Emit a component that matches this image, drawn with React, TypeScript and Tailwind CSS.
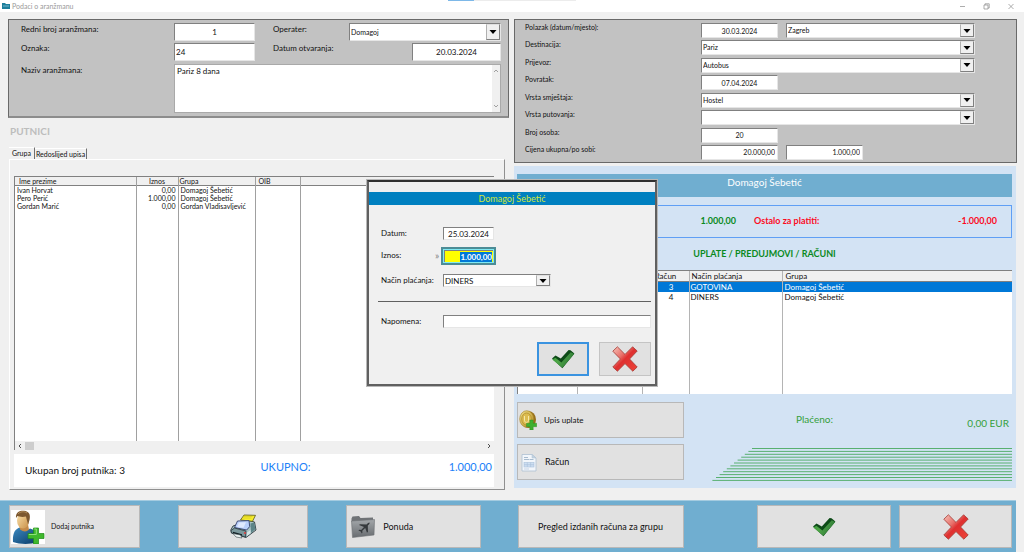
import { useEffect, useRef } from 'react';
import type { ReactNode } from 'react';
import clsx from 'clsx';

const passengers = [
  { name: 'Ivan Horvat', amount: '0,00', group: 'Domagoj Šebetić' },
  { name: 'Pero Perić', amount: '1.000,00', group: 'Domagoj Šebetić' },
  { name: 'Gordan Marić', amount: '0,00', group: 'Gordan Vladisavljević' },
];

const payments = [
  { id: '3', method: 'GOTOVINA', group: 'Domagoj Šebetić', selected: true },
  { id: '4', method: 'DINERS', group: 'Domagoj Šebetić', selected: false },
];

const field =
  'block bg-white border border-t-[#808080] border-l-[#808080] border-r-[#e6e6e6] border-b-[#e6e6e6] outline-none rounded-none min-w-0';

function Dropdown({ id, value, className, label }: { id: string; value: string; className?: string; label?: string }) {
  return (
    <div className={clsx('relative', className)}>
      <select id={id} aria-label={label} defaultValue={value} className={clsx(field, 'appearance-none w-full h-full pl-px pr-4')}>
        <option value={value}>{value}</option>
      </select>
      <span className="absolute right-px top-px bottom-px w-3.5 flex items-center justify-center bg-[#f0f0f0] border border-l-[#b0b0b0] border-t-[#e0e0e0] border-r-[#808080] border-b-[#808080] pointer-events-none">
        <svg viewBox="0 0 8 4" className="w-2 h-1">
          <path d="M.5 0h7L4 4z" fill="#000" />
        </svg>
      </span>
    </div>
  );
}

function CheckIcon() {
  return (
    <svg viewBox="0 0 24 20" className="w-6 h-5">
      <defs>
        <linearGradient id="check" x1="0" y1="0.2" x2="1" y2="0.6">
          <stop offset="0" stopColor="#3a9a3a" />
          <stop offset="0.35" stopColor="#4fa648" />
          <stop offset="1" stopColor="#2b7434" />
        </linearGradient>
      </defs>
      <path d="M1 9.500 4.500 6.500 9.800 9.600 17.600 1 19.500 1.200 23.400 4.600 11.400 19.200z" fill="#0d4a17" />
      <path d="M1.200 10.500 4.400 8.800 10.400 13.600 19.800 3.200 23.200 5 11.400 18.800z" fill="url(#check)" />
    </svg>
  );
}

function CrossIcon() {
  return (
    <svg viewBox="0 0 26 26" className="w-[26px] h-[26px]">
      <defs>
        <linearGradient id="cross" x1="0" y1="0" x2="1" y2="1">
          <stop offset="0" stopColor="#f6c4ba" />
          <stop offset="0.35" stopColor="#e8706a" />
          <stop offset="0.5" stopColor="#df3030" />
          <stop offset="1" stopColor="#ee4438" />
        </linearGradient>
      </defs>
      <path
        d="M5.400.8 13 8.400 20.600.8 25.200 5 17.600 13l7.600 8-4.400 4.200L13 17.600l-7.600 7.600L.8 21l7.600-8L.8 5.200z"
        fill="url(#cross)"
        stroke="#a33a34"
        strokeWidth="0.8"
        strokeLinejoin="round"
      />
    </svg>
  );
}

function UserPlusIcon() {
  return (
    <svg viewBox="0 0 34 34" className="w-[34px] h-[34px] shrink-0 bg-white">
      <defs>
        <linearGradient id="face" x1="0" y1="0" x2="1" y2="1">
          <stop offset="0" stopColor="#fbe3ae" />
          <stop offset="1" stopColor="#c98f45" />
        </linearGradient>
        <linearGradient id="shirt" x1="0" y1="0" x2="1" y2="1">
          <stop offset="0" stopColor="#3b8ac2" />
          <stop offset="1" stopColor="#0a3a66" />
        </linearGradient>
      </defs>
      <path d="M2 32C1.500 23 4 19 9 17.500c5 3 7.500 2.500 10 1 6 1.500 7.500 5 7.500 13.500-6 2.500-18 2.500-24.500 0z" fill="url(#shirt)" />
      <path d="M8.500 16.500 9 19.500c3.500 2.500 6.500 2.500 9 0l-1-5z" fill="#c48a48" />
      <ellipse cx="12" cy="10.500" rx="6" ry="8" fill="url(#face)" />
      <path d="M5 8C4.500 2 9 .5 13 .8c5 .4 6.800 4 5.500 9.200L17 14.500c-.5-2.500-1.500-5.500-2-8C11 7.500 8 6.500 6.500 6z" fill="#7c5830" />
      <path d="M7 4c2-2.500 6-3 9-1" fill="none" stroke="#b4905e" strokeWidth="1" />
      <path d="M22.500 18h5v5.500H33v5h-5.500V34h-5v-5.500H17v-5h5.500z" fill="#3fb82c" stroke="#1f8a18" strokeWidth="0.7" />
      <path d="M23.300 19h2v5.500h-7.500" fill="none" stroke="#8fe27a" strokeWidth="1" />
    </svg>
  );
}

function PrinterIcon() {
  return (
    <svg viewBox="0 0 27 25" className="w-[27px] h-[25px]">
      <path d="M3 12 19 6.500l5.500 1.500 1.500 8-10 7.500L1.500 19 .8 16z" fill="#a9c4c6" stroke="#2c3a40" strokeWidth="0.9" />
      <path d="M10.500 6 14 1l11.500.3-3 6z" fill="#f6ee2e" stroke="#55551c" strokeWidth="0.8" />
      <path d="M12.500 4h9M13.500 2.500h9" stroke="#c9bb18" strokeWidth="0.5" />
      <path d="M4.500 13.500 7.500 7l11.500-.4.7 6-3 3.400z" fill="#b9cffb" stroke="#34406c" strokeWidth="0.9" />
      <path d="M7 13 9 8.500l7-.3-2.500 5.500z" fill="#dfe9ff" />
      <path d="M20.500 9.500 24 8.500l1.500 6.500-4.500 4z" fill="#5c8488" />
      <path d="M1 16.500 4.500 14l11.500 3-.5 6L1.500 19z" fill="#7b989c" stroke="#26343a" strokeWidth="0.8" />
      <path d="M3 17.800 12 20.200v1.500L3 19.200z" fill="#101c22" />
      <path d="M3 19.500 6 23l6 1-1.500-3z" fill="#eef4f4" stroke="#39484c" strokeWidth="0.6" />
      <circle cx="15" cy="19" r="1.100" fill="#d84040" />
      <path d="m17 18.500 3.500-2.500v3.500L17 22z" fill="#d4e6e6" />
    </svg>
  );
}

function FolderPlaneIcon() {
  return (
    <svg viewBox="0 0 24 24" className="w-6 h-6">
      <defs>
        <linearGradient id="folder" x1="0" y1="0" x2="0" y2="1">
          <stop offset="0" stopColor="#a3a7aa" />
          <stop offset="1" stopColor="#686c70" />
        </linearGradient>
      </defs>
      <path d="M.5 3.500 1.500 1.500 8 1l1.500 2L22 2.500v4H.5z" fill="#6f7376" />
      <path d="M.5 6 23.500 4.500 23 20 1.500 22.500z" fill="url(#folder)" stroke="#6d7174" strokeWidth="0.6" />
      <path
        d="M18.500 7.500c-1 0-1.800.8-3 2L9 9.200l-1 .9 5 1.900-2.800 2.900-2-.2-.8.7 2.300 1 1 2.200.7-.8-.1-2 2.900-2.800 1.800 4.800 1-1-.2-6.300c1.200-1.200 2.200-2 1.700-3z"
        fill="#35393c"
      />
    </svg>
  );
}

function CoinPlusIcon() {
  return (
    <svg viewBox="0 0 18 20" className="w-[18px] h-5">
      <defs>
        <linearGradient id="coin" x1="0" y1="0" x2="1" y2="1">
          <stop offset="0" stopColor="#f4e48c" />
          <stop offset="1" stopColor="#ad8418" />
        </linearGradient>
      </defs>
      <ellipse cx="9.500" cy="9.500" rx="7.500" ry="8.600" fill="#97701a" />
      <ellipse cx="7.700" cy="9" rx="7" ry="8.300" fill="url(#coin)" stroke="#a78527" strokeWidth="0.6" />
      <ellipse cx="7.500" cy="9" rx="4.800" ry="6" fill="#dcbc50" stroke="#b18f30" strokeWidth="0.8" />
      <path d="M5.500 6v4.500c0 2.500 4 2.500 4 0V6" fill="none" stroke="#f8eeb2" strokeWidth="0.9" />
      <path d="M10.800 10h3.400v3.300h3.500v3.400h-3.500V20h-3.400v-3.300H7.500v-3.400h3.300z" fill="#3fb030" stroke="#2a8c22" strokeWidth="0.4" />
    </svg>
  );
}

function InvoiceIcon() {
  return (
    <svg viewBox="0 0 16 19" className="w-4 h-[19px]">
      <path d="M1 1.500h10L15 5v13H1z" fill="#f2f6fb" stroke="#adc0d2" strokeWidth="0.8" />
      <path d="M11 1.500V5h4z" fill="#c3d3e2" stroke="#adc0d2" strokeWidth="0.5" />
      <path d="M3 4.500h4M3 6.500h5M8.500 6.500h4" stroke="#9fb4c8" strokeWidth="0.9" />
      <rect x="3" y="9.500" width="10" height="4.500" fill="#cddff2" stroke="#a9c0da" strokeWidth="0.6" />
      <path d="M3 11.700h10M6.300 9.500V14M9.600 9.500V14M3 16h5" stroke="#a9c0da" strokeWidth="0.6" />
    </svg>
  );
}

function ActionButton({ className, label, children }: { className?: string; label?: string; children: ReactNode }) {
  return (
    <button type="button" aria-label={label} className={clsx('flex items-center bg-[#e1e1e1] border border-[#b8b8b8]', className)}>
      {children}
    </button>
  );
}

function TitleBar() {
  return (
    <header className="relative flex items-center justify-between h-3 bg-white pl-0.5 text-[#9a9a9a]">
      <div className="flex items-center gap-0.5 text-[7px] leading-3">
        <svg viewBox="0 0 8 6" className="w-2 h-1.5">
          <path d="M0 0h3l1 1h4v5H0z" fill="#1f7f9c" />
          <path d="M1 3h6" stroke="#8cc7d8" strokeWidth="0.8" />
        </svg>
        Podaci o aranžmanu
      </div>
      <div className="absolute left-[448px] top-0 flex">
        <span className="w-[26px] h-px bg-[#7db8e8]" />
        <span className="w-[102px] h-px bg-[#ececec]" />
      </div>
      <svg viewBox="0 0 56 8" className="w-14 h-2 mr-2.5" fill="none" stroke="#8a8a8a" strokeWidth="0.7">
        <path d="M2 4.500h5M26 3h4v4h-4zM27 3V1.800h4.200V6H30M50.500 2l5 5M55.500 2l-5 5" />
      </svg>
    </header>
  );
}

function ArrangementPanel() {
  return (
    <section className="h-[99px] bg-[#c2c2c2] border border-[#696969] border-b-2 border-b-[#8c8c8c] pt-[3px] pl-3 pr-[7px] text-[8px] leading-[10px] text-[#111]">
      <div className="grid grid-cols-[153px_81px_94px_1fr] gap-y-0.5">
        <label htmlFor="no" className="pt-px">Redni broj aranžmana:</label>
        <input id="no" defaultValue="1" className={clsx(field, 'w-full h-[18px] text-center')} />
        <label htmlFor="operator" className="pl-[18px] pt-px">Operater:</label>
        <Dropdown id="operator" value="Domagoj" className="h-[18px] text-[7px]" />

        <label htmlFor="code">Oznaka:</label>
        <input id="code" defaultValue="24" className={clsx(field, 'w-full h-[18px] pl-px')} />
        <label htmlFor="opened" className="pl-[18px] whitespace-nowrap">Datum otvaranja:</label>
        <input id="opened" defaultValue="20.03.2024" className={clsx(field, 'w-[89px] h-[18px] justify-self-end text-center')} />
      </div>
      <div className="flex mt-[3px]">
        <label htmlFor="title" className="w-[153px] shrink-0 pt-px">Naziv aranžmana:</label>
        <div className="relative flex-1">
          <textarea
            id="title"
            defaultValue="Pariz 8 dana"
            className="block w-full h-[49px] bg-white border border-[#a9a9a9] resize-none outline-none px-0.5 pt-px pr-3 overflow-hidden"
          />
          <div className="absolute right-px top-px bottom-px w-2 flex flex-col justify-between items-center py-1 bg-[#f0f0f0]">
            <svg viewBox="0 0 6 4" className="w-1.5 h-1" fill="none" stroke="#a0a0a0"><path d="M1 3l2-2 2 2" /></svg>
            <svg viewBox="0 0 6 4" className="w-1.5 h-1" fill="none" stroke="#a0a0a0"><path d="M1 1l2 2 2-2" /></svg>
          </div>
        </div>
      </div>
    </section>
  );
}

function PassengersPanel() {
  const cell = 'border-r border-r-[#a0a0a0] whitespace-nowrap';
  return (
    <section>
      <h2 className="mt-2 ml-0.5 text-[10px] leading-[11px] font-bold text-[#bdbdbd]">PUTNICI</h2>
      <div role="tablist" className="flex items-end mt-2.5 ml-px text-[7px] leading-[9px] h-3">
        <button type="button" role="tab" aria-selected="true" className="h-3 px-[3px] border-t border-t-white border-r border-r-[#707070]">Grupa</button>
        <button type="button" role="tab" aria-selected="false" className="h-[11px] px-px border-t border-t-white border-r border-r-[#707070]">Redoslijed upisa</button>
      </div>
      <div className="ml-px mr-1 border-t border-l border-white border-r border-r-[#909090] border-b border-b-[#909090] pt-4 pl-1 pr-2.5 pb-0.5">
        <div className="border-t border-l border-[#808080]">
          <table className="w-full table-fixed border-collapse bg-white text-[7px] leading-[8px]">
            <colgroup>
              <col className="w-[121px]" />
              <col className="w-[42px]" />
              <col className="w-[77px]" />
              <col className="w-[45px]" />
              <col />
            </colgroup>
            <thead>
              <tr className="bg-[#f0f0f0] text-left border-b border-[#808080]">
                <th className={clsx(cell, 'font-normal pl-1')}>Ime prezime</th>
                <th className={clsx(cell, 'font-normal text-center')}>Iznos</th>
                <th className={clsx(cell, 'font-normal pl-px')}>Grupa</th>
                <th className={clsx(cell, 'font-normal pl-[3px]')}>OIB</th>
                <th />
              </tr>
            </thead>
            <tbody>
              {passengers.map((p) => (
                <tr key={p.name}>
                  <td className={clsx(cell, 'pl-0.5')}>{p.name}</td>
                  <td className={clsx(cell, 'pr-0.5 text-right')}>{p.amount}</td>
                  <td className={clsx(cell, 'pl-0.5')}>{p.group}</td>
                  <td className={cell} />
                  <td />
                </tr>
              ))}
              <tr className="h-[231px]">
                <td className={cell} />
                <td className={cell} />
                <td className={cell} />
                <td className={cell} />
                <td />
              </tr>
            </tbody>
          </table>
          <div className="flex items-center justify-between h-[9px] px-[3px] bg-[#f0f0f0]">
            <div className="flex items-center gap-[3px]">
              <svg viewBox="0 0 4 6" className="w-1 h-1.5" fill="none" stroke="#505050"><path d="M3 1 1 3l2 2" /></svg>
              <span className="w-[9px] h-2 bg-[#cdcdcd]" />
            </div>
            <svg viewBox="0 0 4 6" className="w-1 h-1.5" fill="none" stroke="#505050"><path d="m1 1 2 2-2 2" /></svg>
          </div>
        </div>
        <div className="mt-1 h-[33px] flex bg-white">
          <div className="flex-1 pl-[11px] pt-2.5 text-[10px] leading-3">Ukupan broj putnika: 3</div>
          <div className="flex-1 flex justify-between pl-1 pr-0.5 pt-[7px] text-[11px] leading-3 text-[#2080f8]">
            <span>UKUPNO:</span>
            <span>1.000,00</span>
          </div>
        </div>
      </div>
    </section>
  );
}

function TravelPanel() {
  const label = 'w-44 shrink-0';
  return (
    <section className="h-36 flex flex-col justify-between bg-[#c2c2c2] border border-[#696969] pt-[3px] pb-0.5 pl-2.5 pr-[41px] text-[7px] leading-[9px] text-[#111]">
      <div className="flex">
        <label htmlFor="departure" className={label}>Polazak (datum/mjesto):</label>
        <input id="departure" defaultValue="30.03.2024" className={clsx(field, 'w-[77px] h-[15px] text-center')} />
        <Dropdown id="place" label="Mjesto polaska" value="Zagreb" className="flex-1 h-[15px] ml-2" />
      </div>
      <div className="flex">
        <label htmlFor="destination" className={label}>Destinacija:</label>
        <Dropdown id="destination" value="Pariz" className="flex-1 h-[15px]" />
      </div>
      <div className="flex">
        <label htmlFor="transport" className={label}>Prijevoz:</label>
        <Dropdown id="transport" value="Autobus" className="flex-1 h-[15px]" />
      </div>
      <div className="flex">
        <label htmlFor="return" className={label}>Povratak:</label>
        <input id="return" defaultValue="07.04.2024" className={clsx(field, 'w-[77px] h-[15px] text-center')} />
      </div>
      <div className="flex">
        <label htmlFor="lodging" className={label}>Vrsta smještaja:</label>
        <Dropdown id="lodging" value="Hostel" className="flex-1 h-[15px]" />
      </div>
      <div className="flex">
        <label htmlFor="kind" className={label}>Vrsta putovanja:</label>
        <Dropdown id="kind" value="" className="flex-1 h-[15px]" />
      </div>
      <div className="flex">
        <label htmlFor="persons" className={label}>Broj osoba:</label>
        <input id="persons" defaultValue="20" className={clsx(field, 'w-[77px] h-[15px] text-center')} />
      </div>
      <div className="flex">
        <label htmlFor="price" className={label}>Cijena ukupna/po sobi:</label>
        <input id="price" defaultValue="20.000,00" className={clsx(field, 'w-[77px] h-[15px] text-right pr-0.5')} />
        <input aria-label="Cijena po sobi" defaultValue="1.000,00" className={clsx(field, 'w-[77px] h-[15px] ml-2 text-right pr-0.5')} />
      </div>
    </section>
  );
}

function PaymentsPanel() {
  const cell = 'border-r border-r-[#b4b4b4] whitespace-nowrap';
  return (
    <section className="mt-[3px] mr-px bg-[#d3e3f4] pt-2 pl-[3px] pr-1 pb-2">
      <h2 className="h-[23px] bg-[#70aed0] text-center text-[10px] leading-4 text-white">Domagoj Šebetić</h2>
      <div className="flex items-center mt-2 h-[33px] border border-[#5f9ff5] pr-3.5 pb-0.5 text-[9px] leading-3 font-bold">
        <span className="w-[218px] text-right text-[#0a8a1e]">1.000,00</span>
        <span className="ml-[18px] text-[#fb0a1e]">Ostalo za platiti:</span>
        <span className="ml-auto text-[#fb0a1e]">-1.000,00</span>
      </div>
      <h3 className="mt-2.5 text-center text-[9px] leading-3 font-bold text-[#0a8a1e]">UPLATE / PREDUJMOVI / RAČUNI</h3>
      <div className="mt-2.5 border-t border-l border-[#808080]">
        <table className="w-full table-fixed border-collapse bg-white text-[8px] leading-[10px]">
          <colgroup>
            <col className="w-[59px]" />
            <col className="w-[65px]" />
            <col className="w-[47px]" />
            <col className="w-[93px]" />
            <col />
          </colgroup>
          <thead>
            <tr className="bg-[#f0f0f0] text-left border-b border-[#808080]">
              <th className={cell} />
              <th className={cell} />
              <th className={clsx(cell, 'font-normal text-center')}>Račun</th>
              <th className={clsx(cell, 'font-normal pl-0.5')}>Način plaćanja</th>
              <th className="font-normal pl-[3px]">Grupa</th>
            </tr>
          </thead>
          <tbody>
            {payments.map((p) => (
              <tr key={p.id} className={p.selected ? 'bg-[#0078d7] text-white' : ''}>
                <td className={cell} />
                <td className={cell} />
                <td className={clsx(cell, 'text-right pr-[15px]')}>{p.id}</td>
                <td className={clsx(cell, 'pl-px')}>{p.method}</td>
                <td className="pl-0.5">{p.group}</td>
              </tr>
            ))}
            <tr className="h-[92px]">
              <td className={cell} />
              <td className={cell} />
              <td className={cell} />
              <td className={cell} />
              <td />
            </tr>
          </tbody>
        </table>
      </div>
      <div className="flex mt-2">
        <div className="flex flex-col gap-1.5 w-[167px] shrink-0">
          <ActionButton className="h-9 pl-px gap-[7px] text-[8px]">
            <CoinPlusIcon />
            Upis uplate
          </ActionButton>
          <ActionButton className="h-9 pl-[3px] gap-2 text-[9px]">
            <InvoiceIcon />
            Račun
          </ActionButton>
        </div>
        <div className="flex-1 flex flex-col justify-between pl-7 text-[#35a03c]">
          <div className="flex justify-between pl-[84px] pr-[3px] pt-2.5 text-[10px] leading-[14px]">
            <span>Plaćeno:</span>
            <span className="pt-1">0,00 EUR</span>
          </div>
          <svg viewBox="0 0 300 34" preserveAspectRatio="none" className="w-full h-[34px] translate-y-px" stroke="#58b070" strokeWidth="1">
            {Array.from({ length: 12 }, (_, i) => (
              <path key={i} d={`M${40 - i * 3.6} ${1.5 + i * 2.9}H300`} />
            ))}
          </svg>
        </div>
      </div>
    </section>
  );
}

function PaymentDialog() {
  const amount = useRef<HTMLInputElement>(null);

  useEffect(() => {
    amount.current?.focus();
    amount.current?.select();
  }, []);

  return (
    <div className="absolute inset-0 flex items-start justify-center pt-[180px]">
      <div role="dialog" aria-label="Domagoj Šebetić" className="w-[290px] bg-[#f0f0f0] border-2 border-[#606060] border-t-[#303030] outline outline-[#b8b8b8] pb-2 text-[8px] leading-[10px]">
        <h2 className="mt-2.5 h-[13px] bg-[#0080c0] text-center text-[9px] leading-[13px] text-[#cfe63a]">Domagoj Šebetić</h2>
        <div className="pl-3 pr-1">
          <div className="flex mt-[22px]">
            <label htmlFor="date" className="w-[62px] pt-px">Datum:</label>
            <input id="date" defaultValue="25.03.2024" className={clsx(field, 'w-[51px] h-[13px] text-center')} />
          </div>
          <div className="flex mt-[7px]">
            <label htmlFor="amount" className="w-[54px] pt-[3px]">Iznos:</label>
            <span className="w-1.5 pt-[3px] text-[10px] text-[#808080]">»</span>
            <div className="border-2 border-[#4c8c96] bg-[#7fe9f2] p-px">
              <input
                id="amount"
                ref={amount}
                defaultValue="1.000,00"
                className="block w-[49px] h-3 bg-[#ffff00] outline-none font-bold text-right pr-px border-t border-l border-[#808080] selection:bg-[#0078d7] selection:text-white"
              />
            </div>
          </div>
          <div className="flex mt-[9px]">
            <label htmlFor="method" className="w-[62px] pt-px whitespace-nowrap">Način plaćanja:</label>
            <Dropdown id="method" value="DINERS" className="w-[108px] h-[13px]" />
          </div>
          <hr className="mt-3.5 -ml-[3px] border-[#606060]" />
          <div className="flex mt-[13px]">
            <label htmlFor="note" className="w-[62px] pt-px">Napomena:</label>
            <input id="note" defaultValue="" className={clsx(field, 'flex-1 h-[13px]')} />
          </div>
          <div className="flex justify-end gap-2.5 mt-3.5">
            <button type="button" aria-label="Potvrdi" className="w-[52px] h-[34px] flex items-center justify-center bg-[#e1e1e1] border-2 border-[#3a93e0]">
              <CheckIcon />
            </button>
            <button type="button" aria-label="Odustani" className="w-[52px] h-[34px] flex items-center justify-center bg-[#e1e1e1] border border-[#c4c4c4]">
              <CrossIcon />
            </button>
          </div>
        </div>
      </div>
    </div>
  );
}

export default function App() {
  return (
    <div className="relative min-h-screen flex flex-col bg-[#f0f0f0] font-['Lato','Noto_Sans',sans-serif] text-[#111]">
      <TitleBar />
      <main className="flex-1 grid grid-cols-[501fr_503fr] gap-x-[5px] pl-2 pr-[7px] pt-[7px] pb-2.5">
        <div>
          <ArrangementPanel />
          <PassengersPanel />
        </div>
        <div>
          <TravelPanel />
          <PaymentsPanel />
        </div>
      </main>
      <footer className="grid grid-cols-[501fr_503fr] gap-x-[5px] mr-2 bg-[#70aed0] border-t border-[#a4cbe0] pl-2 pt-1 pb-1">
        <div className="flex gap-[38px] pl-px pr-7">
          <ActionButton className="flex-1 h-[43px] gap-1.5 pl-px text-[7px]">
            <UserPlusIcon />
            Dodaj putnika
          </ActionButton>
          <ActionButton label="Ispis" className="flex-1 h-[43px] justify-center">
            <PrinterIcon />
          </ActionButton>
          <ActionButton className="flex-1 h-[43px] gap-2 pl-1 text-[9px]">
            <FolderPlaneIcon />
            Ponuda
          </ActionButton>
        </div>
        <div className="flex pl-1 pr-1">
          <ActionButton className="w-[166px] h-[43px] justify-center text-[9px]">Pregled izdanih računa za grupu</ActionButton>
          <ActionButton label="U redu" className="flex-1 h-[43px] ml-[73px] justify-center">
            <CheckIcon />
          </ActionButton>
          <ActionButton label="Zatvori" className="w-[113px] h-[43px] ml-2 justify-center">
            <CrossIcon />
          </ActionButton>
        </div>
      </footer>
      <PaymentDialog />
    </div>
  );
}
